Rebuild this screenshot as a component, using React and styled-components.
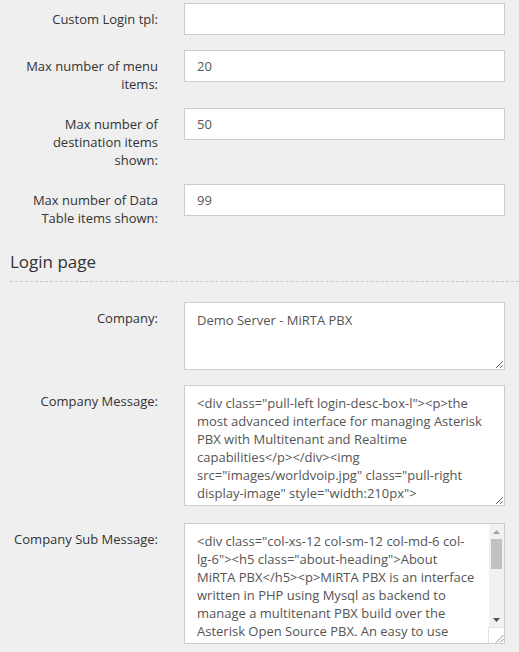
import React from "react";
import styled, { createGlobalStyle } from "styled-components";

const GlobalStyle = createGlobalStyle`
  html, body {
    margin: 0;
    padding: 0;
    background-color: #efefef;
  }
  body {
    font-family: "Open Sans", "Noto Sans", sans-serif;
    font-size: 13px;
    color: #333;
    overflow: hidden;
  }
`;

const Page = styled.div`
  width: 519px;
  height: 652px;
  padding-top: 3px;
  box-sizing: border-box;
  overflow: hidden;
`;

const Fieldset = styled.div`
  display: flex;
  flex-direction: column;
  padding: 0 14px 0 8px;
`;

const FormGroup = styled.div`
  display: grid;
  grid-template-columns: 150px 1fr;
  column-gap: 26px;
  align-items: start;
  margin-bottom: ${({ $mb }) => $mb || 15}px;
`;

const Label = styled.label`
  display: block;
  padding-top: 7px;
  text-align: right;
  line-height: 18px;
  color: #333;
  font-weight: 400;
`;

const TextInput = styled.input`
  display: block;
  width: 100%;
  height: 32px;
  box-sizing: border-box;
  padding: 6px 12px;
  border: 1px solid #ccc;
  border-radius: 0;
  background: #fff;
  font-family: "Open Sans", "Noto Sans", sans-serif;
  font-size: 13px;
  color: #555;
  outline: none;
`;

const TextAreaWrap = styled.div`
  position: relative;
`;

const TextArea = styled.textarea`
  display: block;
  width: 100%;
  height: ${({ $h }) => $h}px;
  box-sizing: border-box;
  margin: 0;
  padding: 8px ${({ $scroll }) => ($scroll ? 27 : 12)}px 8px 12px;
  border: 1px solid #ccc;
  border-radius: 0;
  background: #fff;
  font-family: "Open Sans", "Noto Sans", sans-serif;
  font-size: 13px;
  line-height: 18px;
  color: #555;
  outline: none;
  resize: vertical;
  overflow: hidden;
`;

const ScrollBar = styled.div`
  position: absolute;
  top: 1px;
  right: 1px;
  bottom: 1px;
  width: 15px;
  display: flex;
  flex-direction: column;
  background: #f1f1f1;
  pointer-events: none;
`;

const ScrollArrow = styled.div`
  height: 15px;
  display: flex;
  align-items: center;
  justify-content: center;
  flex-shrink: 0;
`;

const ScrollThumb = styled.div`
  height: 30px;
  margin: 0 2px;
  background: #c1c1c1;
`;

const ScrollSpacer = styled.div`
  flex: 1;
`;

const ScrollCorner = styled.div`
  height: 15px;
  flex-shrink: 0;
  background: #fff;
  border-top: 1px solid #e3e3e3;
  border-left: 1px solid #e3e3e3;
  margin-left: -1px;
  display: flex;
  align-items: flex-end;
  justify-content: flex-end;
`;

const Legend = styled.div`
  margin: 9px 0 20px 10px;
  padding-bottom: 8px;
  border-bottom: 1px dashed #c8c8c8;
  font-size: 17px;
  line-height: 22px;
  color: #333;
`;

const limits = [
  { label: "Custom Login tpl:", value: "" },
  { label: "Max number of menu items:", value: "20" },
  { label: "Max number of destination items shown:", value: "50" },
  { label: "Max number of Data Table items shown:", value: "99" },
];

const companyMessage =
  '<div class="pull-left login-desc-box-l"><p>the most advanced interface for managing Asterisk PBX with Multitenant and Realtime capabilities</p></div><img src="images/worldvoip.jpg" class="pull-right display-image" style="width:210px">';

const companySubMessage =
  '<div class="col-xs-12 col-sm-12 col-md-6 col-lg-6"><h5 class="about-heading">About MiRTA PBX</h5><p>MiRTA PBX is an interface written in PHP using Mysql as backend to manage a multitenant PBX build over the Asterisk Open Source PBX. An easy to use interface allows you to manage all the aspects of your PBX.</p></div>';

const loginFields = [
  { label: "Company:", value: "Demo Server - MiRTA PBX", h: 68, mb: 15 },
  { label: "Company Message:", value: companyMessage, h: 121, mb: 17 },
  { label: "Company Sub Message:", value: companySubMessage, h: 121, scroll: true },
];

const FakeScrollBar = () => (
  <ScrollBar>
    <ScrollArrow>
      <svg width="7" height="4" viewBox="0 0 7 4">
        <polygon points="0,4 3.5,0 7,4" fill="#a3a3a3" />
      </svg>
    </ScrollArrow>
    <ScrollThumb />
    <ScrollSpacer />
    <ScrollArrow>
      <svg width="7" height="4" viewBox="0 0 7 4">
        <polygon points="0,0 7,0 3.5,4" fill="#505050" />
      </svg>
    </ScrollArrow>
    <ScrollCorner>
      <svg width="9" height="9" viewBox="0 0 9 9">
        <line x1="1" y1="8.5" x2="8.5" y2="1" stroke="#888" strokeWidth="1" />
        <line x1="5" y1="8.5" x2="8.5" y2="5" stroke="#888" strokeWidth="1" />
      </svg>
    </ScrollCorner>
  </ScrollBar>
);

export default function App() {
  return (
    <Page>
      <GlobalStyle />
      <Fieldset>
        {limits.map((f, i) => (
          <FormGroup key={i}>
            <Label>{f.label}</Label>
            <TextInput type="text" defaultValue={f.value} />
          </FormGroup>
        ))}
      </Fieldset>

      <Legend>Login page</Legend>

      <Fieldset>
        {loginFields.map((f, i) => (
          <FormGroup key={i} $mb={f.mb}>
            <Label>{f.label}</Label>
            <TextAreaWrap>
              <TextArea $h={f.h} $scroll={f.scroll} defaultValue={f.value} />
              {f.scroll && <FakeScrollBar />}
            </TextAreaWrap>
          </FormGroup>
        ))}
      </Fieldset>
    </Page>
  );
}
